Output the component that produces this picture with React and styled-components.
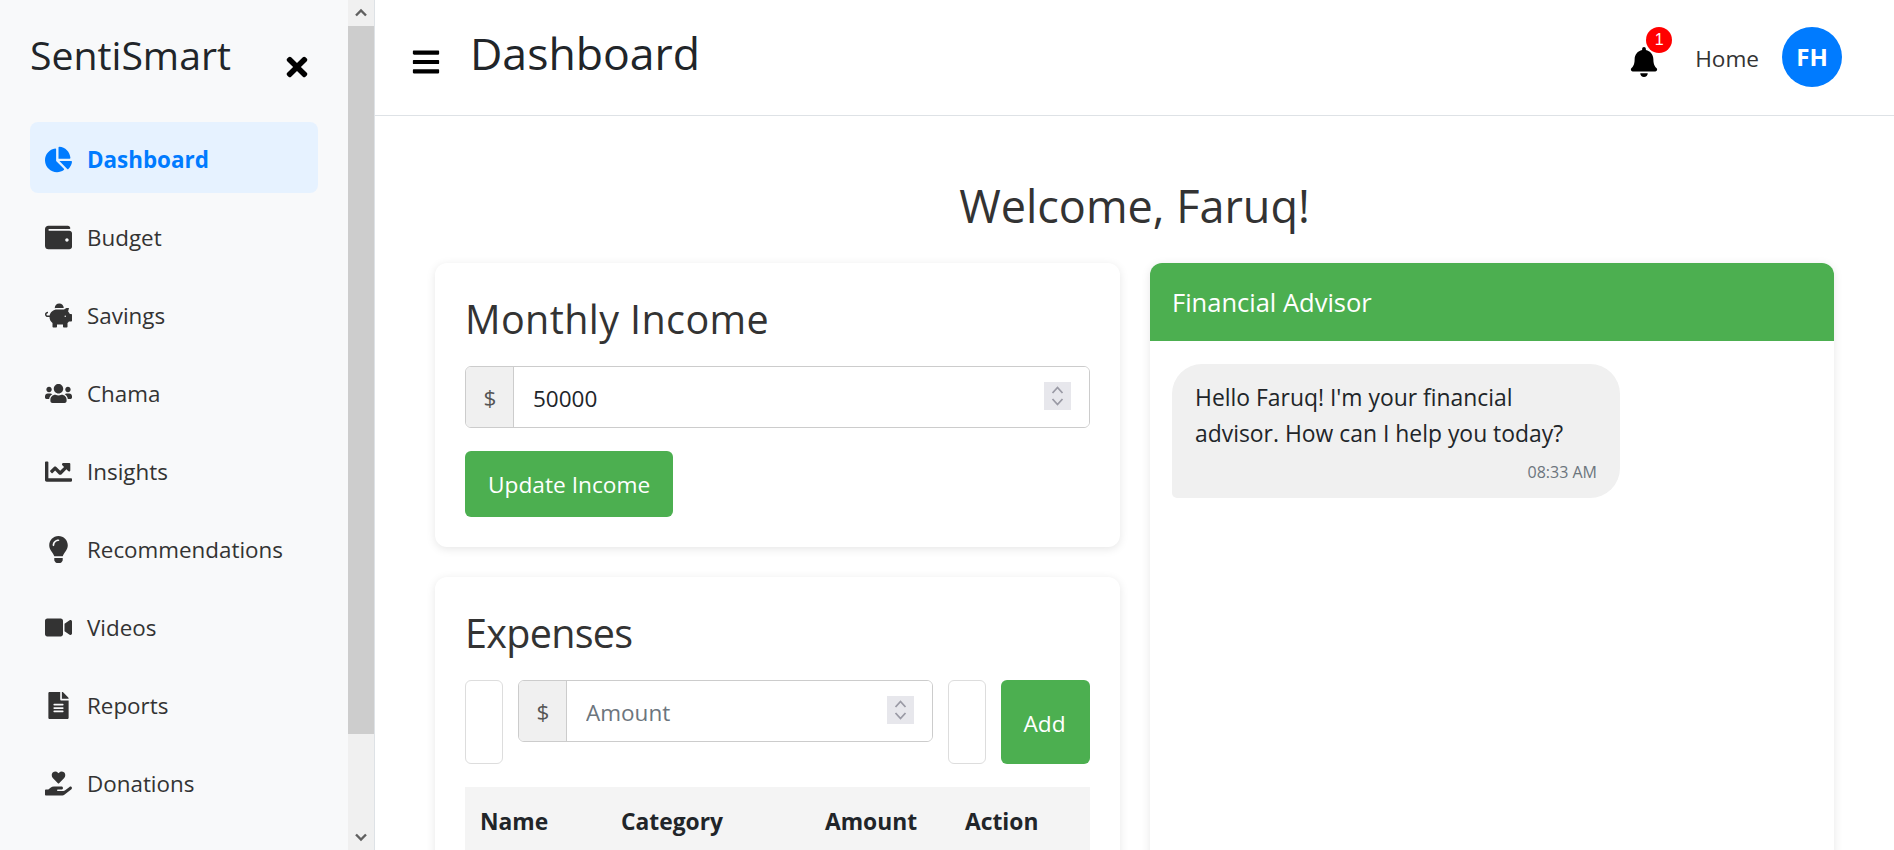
import React from 'react';
import styled, { createGlobalStyle } from 'styled-components';
import {
  FaBars, FaBell, FaChartLine, FaChartPie, FaFileAlt, FaHandHoldingHeart, FaLightbulb,
  FaPiggyBank, FaTimes, FaUsers, FaVideo, FaWallet,
} from 'react-icons/fa';

const GlobalStyle = createGlobalStyle`
  html, body { margin: 0; height: 100%; overflow: hidden; background: #fff; }
  body { font-family: "Open Sans", "Noto Sans", sans-serif; color: #333; }
  * { box-sizing: border-box; }
`;

const Page = styled.div`
  display: flex;
  height: 850px;
  overflow: hidden;
`;

const Sidebar = styled.aside`
  display: flex;
  width: 375px;
  flex-shrink: 0;
  background: #f8f9fa;
  border-right: 1px solid #dee2e6;
`;

const SideContent = styled.div`
  flex: 1;
  padding: 0 30px;
`;

const Brand = styled.div`
  display: flex;
  align-items: center;
  justify-content: space-between;
  height: 122px;
  padding-right: 6px;
`;

const BrandName = styled.span`
  font-size: 39.2px;
  color: #212529;
  margin-top: -13px;
`;

const CloseBtn = styled.span`
  display: flex;
  font-size: 30px;
  color: #000;
  margin-top: 11px;
`;

const Nav = styled.nav`
  display: flex;
  flex-direction: column;
  gap: 7px;
`;

const NavItem = styled.div`
  display: flex;
  align-items: center;
  height: 71px;
  padding: 4px 0 0 15px;
  border-radius: 8px;
  font-size: 22.4px;
  font-weight: ${p => (p.$active ? 700 : 400)};
  color: ${p => (p.$active ? '#007bff' : '#333')};
  background: ${p => (p.$active ? '#e6f2ff' : 'transparent')};
`;

const NavIcon = styled.span`
  display: flex;
  justify-content: center;
  width: 27px;
  margin-right: 15px;
  font-size: 27px;
`;

const Scrollbar = styled.div`
  display: flex;
  flex-direction: column;
  width: 26px;
  background: #f0f0f0;
`;

const ScrollArrow = styled.div`
  display: flex;
  align-items: center;
  justify-content: center;
  height: 26px;
  flex-shrink: 0;
`;

const ScrollThumb = styled.div`
  height: 708px;
  background: #cdcdcd;
`;

const ScrollTrack = styled.div`
  flex: 1;
`;

const Main = styled.main`
  flex: 1;
  min-width: 0;
`;

const Header = styled.header`
  display: flex;
  align-items: center;
  height: 116px;
  padding: 0 52px 0 36px;
  border-bottom: 1px solid #dee2e6;
`;

const MenuBtn = styled.span`
  display: flex;
  font-size: 30px;
  color: #000;
  margin-top: 8px;
  margin-right: 29px;
`;

const PageTitle = styled.h1`
  margin: -10px 0 0;
  font-size: 44.6px;
  font-weight: 400;
  color: #212529;
`;

const HeaderRight = styled.div`
  display: flex;
  align-items: center;
  margin-left: auto;
`;

const BellWrap = styled.span`
  position: relative;
  display: flex;
  font-size: 30px;
  color: #000;
  margin-top: 9px;
  margin-right: 36px;
`;

const Badge = styled.span`
  position: absolute;
  top: -20px;
  right: -13px;
  width: 26px;
  height: 26px;
  border-radius: 50%;
  background: #f00;
  color: #fff;
  font-family: "Liberation Sans", sans-serif;
  font-size: 16px;
  line-height: 26px;
  text-align: center;
`;

const HomeLink = styled.span`
  margin: 2px 23px 0 0;
  font-size: 22.6px;
  color: #333;
`;

const Avatar = styled.span`
  display: flex;
  align-items: center;
  justify-content: center;
  width: 60px;
  height: 60px;
  margin-top: -2px;
  border-radius: 50%;
  background: #007bff;
  color: #fff;
  font-size: 24px;
  font-weight: 700;
`;

const Content = styled.div`
  padding: 0 60px;
`;

const Welcome = styled.h1`
  margin: 0;
  height: 147px;
  padding-top: 57px;
  text-align: center;
  font-size: 45px;
  line-height: 66px;
  font-weight: 400;
  color: #333;
`;

const Columns = styled.div`
  display: grid;
  grid-template-columns: 1fr 1fr;
  gap: 30px;
  align-items: start;
`;

const Stack = styled.div`
  display: flex;
  flex-direction: column;
  gap: 30px;
`;

const Card = styled.section`
  padding: 30px;
  background: #fff;
  border-radius: 12px;
  box-shadow: 0 2px 10px rgba(0, 0, 0, 0.1);
`;

const CardTitle = styled.h2`
  margin: -3px 0 18px;
  font-size: 39.5px;
  line-height: 58px;
  font-weight: 400;
  color: #333;
  letter-spacing: ${p => p.$spacing}px;
`;

const InputGroup = styled.div`
  display: flex;
  flex: ${p => (p.$grow ? 1 : 'none')};
  height: 62px;
  border: 1.5px solid #ccc;
  border-radius: 6px;
  overflow: hidden;
`;

const Addon = styled.span`
  display: flex;
  align-items: center;
  justify-content: center;
  width: 48px;
  flex-shrink: 0;
  padding-left: 1px;
  background: #f0f0f0;
  border-right: 1px solid #ccc;
  font-size: 22.5px;
  color: #555;
`;

const FieldWrap = styled.div`
  position: relative;
  flex: 1;
`;

const Field = styled.input`
  width: 100%;
  height: 100%;
  padding: 2px 19px 0;
  border: none;
  outline: none;
  font: inherit;
  font-size: 22.5px;
  color: #212529;
  &::placeholder { color: #6c757d; opacity: 1; }
`;

const Spinner = styled.span`
  position: absolute;
  top: 15px;
  right: 18px;
  display: flex;
  width: 27px;
  height: 28px;
  background: #e7e7ec;
`;

const PrimaryBtn = styled.button`
  display: block;
  height: 66px;
  margin-top: 23px;
  padding: 0 23px;
  border: none;
  border-radius: 6px;
  background: #4caf50;
  color: #fff;
  font: inherit;
  font-size: 22.7px;
`;

const ExpenseForm = styled.div`
  display: flex;
  align-items: flex-start;
  gap: 15px;
`;

const TinyInput = styled.input`
  width: 38px;
  height: 84px;
  flex-shrink: 0;
  padding: 0;
  border: 1.5px solid #ddd;
  border-radius: 6px;
  outline: none;
`;

const AddBtn = styled.button`
  width: 89px;
  height: 84px;
  flex-shrink: 0;
  padding: 3px 2px 0 0;
  border: none;
  border-radius: 6px;
  background: #4caf50;
  color: #fff;
  font: inherit;
  font-size: 22.7px;
`;

const Table = styled.table`
  width: 100%;
  margin-top: 23px;
  border-collapse: collapse;
  table-layout: fixed;
`;

const Th = styled.th`
  height: 70px;
  padding: 0 0 2px 15px;
  background: #f4f4f4;
  text-align: left;
  font-size: 22.8px;
  font-weight: 700;
  color: #212529;
  width: ${p => p.$width}px;
`;

const ChatCard = styled.section`
  background: #fff;
  border-radius: 12px;
  box-shadow: 0 2px 10px rgba(0, 0, 0, 0.1);
  overflow: hidden;
  height: 800px;
`;

const ChatHeader = styled.div`
  display: flex;
  align-items: center;
  height: 78px;
  padding: 0 22px;
  background: #4caf50;
  color: #fff;
  font-size: 25.5px;
`;

const ChatBody = styled.div`
  padding: 23px 22px;
`;

const Bubble = styled.div`
  width: 448px;
  height: 134px;
  padding: 16px 23px 0;
  background: #f0f0f0;
  border-radius: 30px 30px 30px 5px;
  font-size: 22.9px;
  line-height: 36px;
  color: #212529;
`;

const BubbleTime = styled.div`
  margin-top: 8px;
  text-align: right;
  font-size: 16px;
  line-height: 24px;
  color: #6c757d;
`;

const navItems = [
  { label: 'Dashboard', icon: <FaChartPie />, active: true },
  { label: 'Budget', icon: <FaWallet /> },
  { label: 'Savings', icon: <FaPiggyBank /> },
  { label: 'Chama', icon: <FaUsers /> },
  { label: 'Insights', icon: <FaChartLine /> },
  { label: 'Recommendations', icon: <FaLightbulb /> },
  { label: 'Videos', icon: <FaVideo /> },
  { label: 'Reports', icon: <FaFileAlt /> },
  { label: 'Donations', icon: <FaHandHoldingHeart /> },
];

const Chevron = ({ up, color = '#606060', size = 14 }) => (
  <svg width={size} height={size} viewBox="0 0 14 14" fill="none">
    <path
      d={up ? 'M2 9.5 7 4.5l5 5' : 'M2 4.5 7 9.5l5-5'}
      stroke={color}
      strokeWidth="2.4"
    />
  </svg>
);

const SpinnerIcon = () => (
  <Spinner>
    <svg width="27" height="28" viewBox="0 0 27 28" fill="none" stroke="#9a9aa5" strokeWidth="1.8">
      <path d="M8.5 11 13.500 5.500 18.500 11" />
      <path d="M8.500 17 13.500 22.500 18.500 17" />
    </svg>
  </Spinner>
);

const App = () => (
  <Page>
    <GlobalStyle />
    <Sidebar>
      <SideContent>
        <Brand>
          <BrandName>SentiSmart</BrandName>
          <CloseBtn><FaTimes /></CloseBtn>
        </Brand>
        <Nav>
          {navItems.map(item => (
            <NavItem key={item.label} $active={item.active}>
              <NavIcon>{item.icon}</NavIcon>
              {item.label}
            </NavItem>
          ))}
        </Nav>
      </SideContent>
      <Scrollbar>
        <ScrollArrow><Chevron up /></ScrollArrow>
        <ScrollThumb />
        <ScrollTrack />
        <ScrollArrow><Chevron /></ScrollArrow>
      </Scrollbar>
    </Sidebar>
    <Main>
      <Header>
        <MenuBtn><FaBars /></MenuBtn>
        <PageTitle>Dashboard</PageTitle>
        <HeaderRight>
          <BellWrap>
            <FaBell />
            <Badge>1</Badge>
          </BellWrap>
          <HomeLink>Home</HomeLink>
          <Avatar>FH</Avatar>
        </HeaderRight>
      </Header>
      <Content>
        <Welcome>Welcome, Faruq!</Welcome>
        <Columns>
          <Stack>
            <Card>
              <CardTitle $spacing={0.4}>Monthly Income</CardTitle>
              <InputGroup>
                <Addon>$</Addon>
                <FieldWrap>
                  <Field defaultValue="50000" />
                  <SpinnerIcon />
                </FieldWrap>
              </InputGroup>
              <PrimaryBtn>Update Income</PrimaryBtn>
            </Card>
            <Card>
              <CardTitle $spacing={-0.7}>Expenses</CardTitle>
              <ExpenseForm>
                <TinyInput />
                <InputGroup $grow>
                  <Addon>$</Addon>
                  <FieldWrap>
                    <Field placeholder="Amount" />
                    <SpinnerIcon />
                  </FieldWrap>
                </InputGroup>
                <TinyInput />
                <AddBtn>Add</AddBtn>
              </ExpenseForm>
              <Table>
                <thead>
                  <tr>
                    <Th $width={141}>Name</Th>
                    <Th $width={204}>Category</Th>
                    <Th $width={140}>Amount</Th>
                    <Th $width={140}>Action</Th>
                  </tr>
                </thead>
              </Table>
            </Card>
          </Stack>
          <ChatCard>
            <ChatHeader>Financial Advisor</ChatHeader>
            <ChatBody>
              <Bubble>
                Hello Faruq! I'm your financial
                <br />
                advisor. How can I help you today?
                <BubbleTime>08:33 AM</BubbleTime>
              </Bubble>
            </ChatBody>
          </ChatCard>
        </Columns>
      </Content>
    </Main>
  </Page>
);

export default App;
